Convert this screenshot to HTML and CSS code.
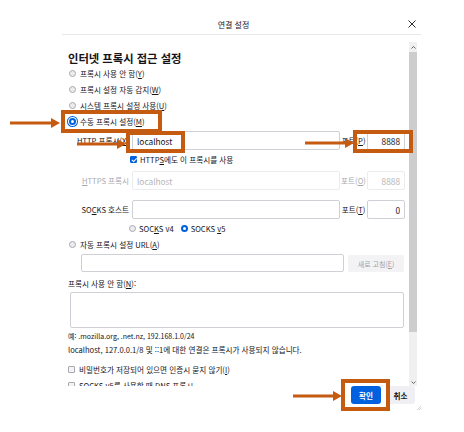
FILE: index.html
```html
<!DOCTYPE html>
<html lang="ko">
  <head>
    <meta charset="UTF-8" />
    <meta name="viewport" content="width=device-width, initial-scale=1.0" />
    <title>연결 설정</title>
    <link rel="stylesheet" href="styles.css">
  </head>
  <body>
    <div class="screen">
      <div class="dialog">
        <div class="titlebar">
          <span class="title">연결 설정</span>
          <span class="close">
            <svg width="8" height="8" viewBox="0 0 8 8">
              <path d="M0.5 0.5 L7.5 7.5 M7.5 0.5 L0.5 7.5" stroke="#15141a" stroke-width="0.9" />
            </svg>
          </span>
        </div>

        <div class="main">
          <div class="pane">
            <h2 class="heading">인터넷 프록시 접근 설정</h2>
            <div class="opt"><span class="radio"></span>프록시 사용 안 함(<u>Y</u>)</div>
            <div class="opt"><span class="radio"></span>프록시 설정 자동 감지(<u>W</u>)</div>
            <div class="opt"><span class="radio"></span>시스템 프록시 설정 사용(<u>U</u>)</div>
            <div class="opt opt-manual"><span class="radio on focus"></span>수동 프록시 설정(<u>M</u>)</div>

            <div class="proxy-row first">
              <label class="plabel">HTTP 프록시(<u>X</u>)</label>
              <input class="field" type="text" value="localhost" />
              <label class="port-label">포트(<u>P</u>)</label>
              <input class="field port" type="text" value="8888" />
            </div>
            <div class="check-row"><span class="check on"></span>HTTP<u>S</u>에도 이 프록시를 사용</div>

            <div class="proxy-row off https">
              <label class="plabel"><u>H</u>TTPS 프록시</label>
              <input class="field" type="text" value="localhost" disabled />
              <label class="port-label">포트(<u>O</u>)</label>
              <input class="field port" type="text" value="8888" disabled />
            </div>

            <div class="proxy-row socks">
              <label class="plabel">SO<u>C</u>KS 호스트</label>
              <input class="field" type="text" value="" />
              <label class="port-label">포트(<u>T</u>)</label>
              <input class="field port" type="text" value="0" />
            </div>
            <div class="socks-ver">
              <span class="radio"></span><span>SOC<u>K</u>S v4</span>
              <span class="radio on v5"></span><span>SOCKS <u>v</u>5</span>
            </div>

            <div class="opt opt-auto"><span class="radio"></span>자동 프록시 설정 URL(<u>A</u>)</div>
            <div class="url-row">
              <input class="field url" type="text" value="" />
              <button class="reload" disabled>새로 고침(<u>E</u>)</button>
            </div>

            <div class="note-label">프록시 사용 안 함(<u>N</u>):</div>
            <textarea class="bypass"></textarea>
            <div class="note example">예: .mozilla.org, .net.nz, 192.168.1.0/24</div>
            <div class="note">localhost, 127.0.0.1/8 및 ::1에 대한 연결은 프록시가 사용되지 않습니다.</div>

            <div class="opt opt-check"><span class="check"></span>비밀번호가 저장되어 있으면 인증시 묻지 않기(<u>I</u>)</div>
            <div class="opt opt-check"><span class="check"></span>SOCKS v5를 사용할 때 DNS 프록시</div>
          </div>

          <div class="scrollbar">
            <div class="sb-up">
              <svg width="5" height="3" viewBox="0 0 5 3"><path d="M0.5 2.5 L2.5 0.5 L4.5 2.5" fill="none" stroke="#555" stroke-width="0.9" /></svg>
            </div>
            <div class="sb-thumb"></div>
            <div class="sb-track"></div>
            <div class="sb-down">
              <svg width="5" height="3" viewBox="0 0 5 3"><path d="M0.5 0.5 L2.5 2.5 L4.5 0.5" fill="none" stroke="#555" stroke-width="0.9" /></svg>
            </div>
          </div>
        </div>

        <div class="footer">
          <button class="btn primary">확인</button>
          <button class="btn">취소</button>
          <span class="grip">
            <svg width="4" height="4" viewBox="0 0 4 4"><path d="M0 4 L4 0 M2 4 L4 2" stroke="#bbb" stroke-width="0.7" /></svg>
          </span>
        </div>
      </div>

      <!-- orange annotations drawn over the dialog -->
      <svg class="marks" width="464" height="432" viewBox="0 0 464 432">
        <g fill="none" stroke="#c55a11" stroke-width="4">
          <rect x="63" y="112" width="97" height="19" />
          <rect x="128" y="133" width="55" height="18" />
          <rect x="355" y="132" width="56" height="19" />
          <rect x="343" y="381" width="45" height="28" />
        </g>
        <g stroke="#c55a11" stroke-width="3">
          <line x1="10" y1="123" x2="52" y2="123" />
          <line x1="77" y1="144" x2="118" y2="144" />
          <line x1="305" y1="143" x2="346" y2="143" />
          <line x1="293" y1="396" x2="334" y2="396" />
        </g>
        <g fill="#c55a11">
          <polygon points="51,118 60,123 51,128" />
          <polygon points="117,139 126,144 117,149" />
          <polygon points="345,138 354,143 345,148" />
          <polygon points="333,391 342,396 333,401" />
        </g>
      </svg>
    </div>
  </body>
</html>
```

FILE: styles.css
```css
* {
  box-sizing: border-box;
}
body {
  margin: 0;
  background-color: white;
  font-family: "Noto Sans CJK KR", "Noto Sans", sans-serif;
  font-size: 7.6px;
  color: #15141a;
}
u {
  text-decoration-thickness: 0.6px;
  text-underline-offset: 1px;
}
.screen {
  position: relative;
  width: 464px;
  height: 432px;
  overflow: hidden;
}
.dialog {
  width: 359px;
  margin: 14px 0 0 62px;
}
.titlebar {
  display: flex;
  align-items: center;
  height: 21px;
  border-bottom: 1px solid #e8e8ec;
}
.title {
  flex: 1;
  text-align: center;
  font-size: 8px;
}
.close {
  width: 14px;
  margin-right: 2px;
  display: flex;
  justify-content: center;
}
.main {
  display: flex;
  height: 351px;
}
.pane {
  width: 347px;
  overflow: hidden;
  padding: 16px 0 0 6px;
}
.heading {
  margin: 0;
  font-size: 11.3px;
  font-weight: bold;
  line-height: 14px;
}
.opt {
  display: flex;
  align-items: center;
  height: 16px;
  white-space: nowrap;
}
.opt-manual {
  margin-top: 1px;
  height: 15px;
}
.opt-auto {
  margin-top: 1px;
}
.radio {
  width: 7px;
  height: 7px;
  margin: 0 4px 0 1px;
  border: 1px solid #a8a8ae;
  border-radius: 50%;
  background-color: #ececef;
  flex-shrink: 0;
}
.radio.on {
  border: 2px solid #0061e0;
  background-color: white;
}
.radio.focus {
  box-shadow: 0 0 0 1px white, 0 0 0 2px #0061e0;
}
.check {
  width: 7px;
  height: 7px;
  border: 1px solid #a8a8ae;
  border-radius: 1px;
  background-color: #f4f4f6;
  flex-shrink: 0;
}
.check.on {
  border-color: #0061e0;
  background-color: #0061e0;
  position: relative;
}
.check.on::after {
  content: "";
  position: absolute;
  left: 1.5px;
  top: 0;
  width: 2px;
  height: 3.5px;
  border: solid white;
  border-width: 0 1px 1px 0;
  transform: rotate(45deg);
}
.proxy-row {
  display: grid;
  grid-template-columns: 64px 208px 27px 38px;
  align-items: center;
  height: 19px;
}
.proxy-row.first {
  margin-top: 2px;
}
.proxy-row.https {
  margin-top: 5px;
}
.proxy-row.socks {
  margin-top: 10px;
}
.plabel {
  text-align: right;
  padding-right: 3px;
  white-space: nowrap;
}
.port-label {
  text-align: center;
  white-space: nowrap;
}
.field {
  height: 19px;
  margin: 0;
  padding: 0 4px;
  border: 1px solid #cfcfd6;
  border-radius: 2px;
  background-color: white;
  font: inherit;
  font-size: 8.3px;
  color: #15141a;
  outline: none;
}
.field.port {
  text-align: right;
  padding-right: 4px;
}
.off .plabel,
.off .port-label {
  color: #a9a9ad;
}
.field:disabled {
  border-color: #ececef;
  color: #b5b5b9;
}
.check-row {
  display: flex;
  align-items: center;
  height: 14px;
  margin-top: 2px;
  padding-left: 62px;
}
.check-row .check {
  margin-right: 3px;
}
.socks-ver {
  display: flex;
  align-items: center;
  height: 14px;
  margin-top: 2px;
  padding-left: 60px;
}
.socks-ver .radio {
  margin-right: 3px;
}
.socks-ver .radio.v5 {
  margin-left: 7px;
}
.url-row {
  display: flex;
  gap: 4px;
  margin-top: 2px;
  padding-left: 13px;
}
.field.url {
  width: 263px;
  height: 18px;
}
.reload {
  width: 56px;
  height: 17px;
  margin-top: 1px;
  border: none;
  border-radius: 2px;
  background-color: #f3f3f5;
  font: inherit;
  font-size: 7px;
  color: #a0a0a6;
}
.note-label {
  margin-top: 5px;
  line-height: 14px;
}
.bypass {
  display: block;
  width: 334px;
  height: 36px;
  margin: 1px 0 0 2px;
  border: 1px solid #cfcfd6;
  border-radius: 2px;
  resize: none;
}
.note {
  line-height: 14px;
}
.note.example {
  margin-top: 1px;
  font-size: 7px;
}
.opt-check .check {
  margin-right: 4px;
}
.note + .opt-check {
  margin-top: 4px;
}
.scrollbar {
  width: 8px;
  margin-top: 7px;
  display: flex;
  flex-direction: column;
  background-color: #f0f0f0;
}
.sb-up {
  height: 10px;
  display: flex;
  justify-content: center;
  align-items: center;
}
.sb-thumb {
  height: 280px;
  background-color: #cdcdcd;
}
.sb-track {
  flex: 1;
}
.sb-down {
  height: 8px;
  display: flex;
  justify-content: center;
  align-items: center;
}
.footer {
  display: flex;
  justify-content: flex-end;
  height: 24px;
}
.btn {
  height: 18px;
  padding: 0;
  border: none;
  border-radius: 3px;
  font: inherit;
  font-weight: bold;
  cursor: pointer;
}
.btn.primary {
  width: 30px;
  margin-right: 5px;
  background-color: #0061e0;
  color: white;
}
.btn:not(.primary) {
  width: 29px;
  background-color: #f0f0f4;
  color: #15141a;
}
.grip {
  align-self: flex-end;
  width: 4px;
  height: 4px;
  margin-left: 2px;
  display: flex;
}
.marks {
  position: absolute;
  left: 0;
  top: 0;
  pointer-events: none;
}
```
